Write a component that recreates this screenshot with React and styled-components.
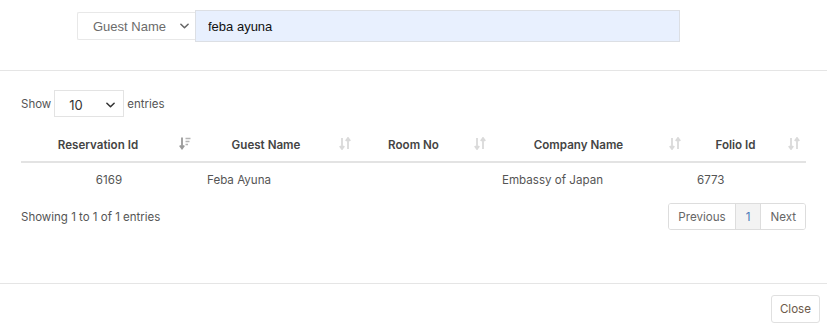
import React from 'react';
import styled, { createGlobalStyle } from 'styled-components';

const GlobalStyle = createGlobalStyle`
  html, body {
    margin: 0;
    padding: 0;
    background: #fff;
  }
  body {
    font-family: Inter, "Noto Sans", sans-serif;
    color: #555;
  }
`;

const columns = [
  { key: 'id', label: 'Reservation Id', width: 176, align: 'center', sorted: true },
  { key: 'guest', label: 'Guest Name', width: 160, align: 'left' },
  { key: 'room', label: 'Room No', width: 135, align: 'left' },
  { key: 'company', label: 'Company Name', width: 195, align: 'left' },
  { key: 'folio', label: 'Folio Id', width: 119, align: 'left' },
];

const rows = [
  { id: '6169', guest: 'Feba Ayuna', room: '', company: 'Embassy of Japan', folio: '6773' },
];

export default function App() {
  return (
    <>
      <GlobalStyle />
      <Modal>
        <SearchSection>
          <SearchGroup>
            <FieldSelect>
              <span>Guest Name</span>
              <Chevron color="#666" />
            </FieldSelect>
            <SearchInput defaultValue="feba ayuna" />
          </SearchGroup>
        </SearchSection>

        <ResultSection>
          <LengthRow>
            Show
            <LengthSelect>
              <span>10</span>
              <Chevron color="#333" />
            </LengthSelect>
            entries
          </LengthRow>

          <Table>
            <colgroup>
              {columns.map((c) => (
                <col key={c.key} style={{ width: c.width }} />
              ))}
            </colgroup>
            <thead>
              <tr>
                {columns.map((c) => (
                  <Th key={c.key}>
                    {c.label}
                    <SortIcon active={c.sorted} />
                  </Th>
                ))}
              </tr>
            </thead>
            <tbody>
              {rows.map((r) => (
                <tr key={r.id}>
                  {columns.map((c) => (
                    <Td key={c.key} $align={c.align}>
                      {r[c.key]}
                    </Td>
                  ))}
                </tr>
              ))}
            </tbody>
          </Table>

          <InfoRow>
            <Info>Showing 1 to 1 of 1 entries</Info>
            <Pager>
              <PageButton>Previous</PageButton>
              <PageButton $current>1</PageButton>
              <PageButton>Next</PageButton>
            </Pager>
          </InfoRow>
        </ResultSection>

        <Footer>
          <CloseButton>Close</CloseButton>
        </Footer>
      </Modal>
    </>
  );
}

function Chevron({ color }) {
  return (
    <ChevronSvg viewBox="0 0 10 6" width="9" height="6">
      <path d="M1 1l4 4 4-4" fill="none" stroke={color} strokeWidth="1.7" strokeLinecap="round" strokeLinejoin="round" />
    </ChevronSvg>
  );
}

function SortIcon({ active }) {
  if (active) {
    return (
      <SortSvg viewBox="0 0 12 13" width="12" height="13">
        <path d="M3 0.5v11M0.8 8.5l2.2 3 2.2-3" fill="none" stroke="#9a9a9a" strokeWidth="1.8" />
        <path d="M6.5 1.5h5M6.5 4.5h4M6.5 7.5h2.5" fill="none" stroke="#b5b5b5" strokeWidth="1.6" />
      </SortSvg>
    );
  }
  return (
    <SortSvg viewBox="0 0 12 13" width="12" height="13">
      <path d="M3 1v11M0.8 9l2.2 3 2.2-3" fill="none" stroke="#dadada" strokeWidth="1.8" />
      <path d="M9 12V1M6.8 4l2.2-3 2.2 3" fill="none" stroke="#dadada" strokeWidth="1.8" />
    </SortSvg>
  );
}

// Styled Components
const Modal = styled.div`
  width: 827px;
  height: 332px;
  background: #fff;
  display: flex;
  flex-direction: column;
`;

const SearchSection = styled.div`
  padding: 10px 0 28px 77px;
  border-bottom: 1px solid #e5e5e5;
`;

const SearchGroup = styled.div`
  display: flex;
  align-items: center;
  width: 603px;
`;

const FieldSelect = styled.div`
  box-sizing: border-box;
  width: 118px;
  height: 28px;
  border: 1px solid #e8e8e8;
  border-right: none;
  border-radius: 2px 0 0 2px;
  display: flex;
  align-items: center;
  justify-content: space-between;
  padding: 0 6px 0 15px;
  font-family: "Liberation Sans", Arial, sans-serif;
  font-size: 13px;
  color: #6b6b6b;
`;

const SearchInput = styled.input`
  box-sizing: border-box;
  flex: 1;
  height: 32px;
  border: 1px solid #dcdfe4;
  background: #e8f0fe;
  padding: 0 12px;
  font-family: "Liberation Sans", Arial, sans-serif;
  font-size: 13px;
  color: #111;
  outline: none;
`;

const ChevronSvg = styled.svg`
  display: block;
  flex-shrink: 0;
`;

const ResultSection = styled.div`
  flex: 1;
  padding: 19px 21px 0 21px;
  display: flex;
  flex-direction: column;
`;

const LengthRow = styled.div`
  display: flex;
  align-items: center;
  gap: 3px;
  font-size: 11.5px;
  color: #555;
`;

const LengthSelect = styled.div`
  box-sizing: border-box;
  width: 70px;
  height: 27px;
  border: 1px solid #e3e3e3;
  display: flex;
  align-items: center;
  justify-content: space-between;
  padding: 2px 8px 0 14px;
  font-size: 13px;
  color: #333;
`;

const Table = styled.table`
  width: 785px;
  margin-top: 11px;
  border-collapse: collapse;
  table-layout: fixed;
`;

const Th = styled.th`
  position: relative;
  box-sizing: border-box;
  height: 34px;
  padding: 0 30px 0 8px;
  border-bottom: 2px solid #e3e3e3;
  font-size: 11.6px;
  font-weight: 600;
  color: #444;
  text-align: center;
`;

const SortSvg = styled.svg`
  position: absolute;
  right: 6px;
  top: 9px;
`;

const Td = styled.td`
  height: 33px;
  padding: 0 10px;
  font-size: 11.6px;
  color: #555;
  text-align: ${(p) => p.$align};
`;

const InfoRow = styled.div`
  display: flex;
  align-items: center;
  justify-content: space-between;
  margin-top: 7px;
`;

const Info = styled.div`
  font-size: 11.5px;
  color: #555;
`;

const Pager = styled.div`
  display: flex;
  border: 1px solid #ddd;
  border-radius: 3px;
  overflow: hidden;
`;

const PageButton = styled.div`
  height: 25px;
  padding: 0 ${(p) => (p.$current ? '10px' : '9px')};
  display: flex;
  align-items: center;
  font-size: 11.6px;
  color: ${(p) => (p.$current ? '#4a78b8' : '#666')};
  background: ${(p) => (p.$current ? '#f3f3f3' : '#fff')};
  & + & {
    border-left: 1px solid #ddd;
  }
`;

const Footer = styled.div`
  height: 48px;
  border-top: 1px solid #e5e5e5;
  display: flex;
  align-items: center;
  justify-content: flex-end;
  padding-right: 7px;
`;

const CloseButton = styled.button`
  box-sizing: border-box;
  height: 28px;
  padding: 0 8px;
  border: 1px solid #e0e0e0;
  border-radius: 3px;
  background: #fff;
  font-family: Inter, sans-serif;
  font-size: 11.6px;
  color: #6d5a4a;
  margin-top: 1px;
`;
